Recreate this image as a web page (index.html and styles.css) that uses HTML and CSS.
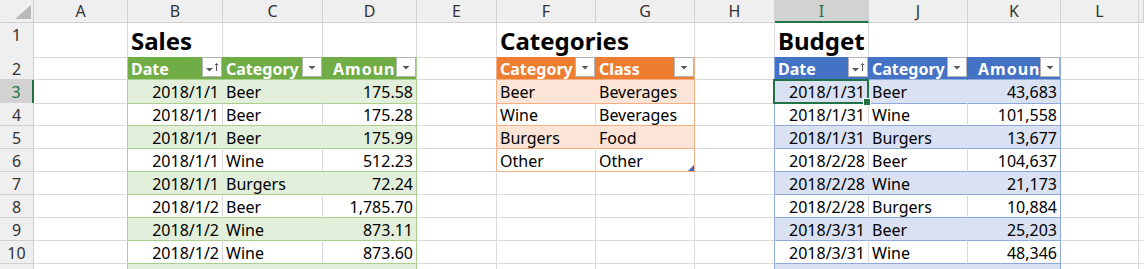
FILE: index.html
```html
<!DOCTYPE html>
<html>
<head>
<meta charset="utf-8">
<link rel="stylesheet" href="styles.css">
</head>
<body>
<div class="sheet">
  <div class="row hdr">
    <div class="corner"><svg width="33" height="22" viewBox="0 0 33 22"><polygon points="31,5 31,19 15,19" fill="#b9b9b9"/></svg></div>
    <div>A</div><div>B</div><div>C</div><div>D</div><div>E</div><div>F</div><div>G</div><div>H</div><div class="sel">I</div><div>J</div><div>K</div><div>L</div><div></div>
  </div>
  <div class="row r1">
    <div class="rh">1</div><div></div><div class="title">Sales</div><div></div><div></div><div></div><div class="title ov">Categories</div><div></div><div></div><div class="title">Budget</div><div></div><div></div><div></div><div></div>
  </div>
  <div class="row">
    <div class="rh">2</div>
    <div class="g tl"></div>
    <div class="g th">Date<span class="fb"><svg width="18" height="18" viewBox="0 0 18 18"><polygon points="3,10 10,10 6.5,13.5" fill="#595959"/><path d="M13.5 5.5V13 M11.8 7.3 13.5 5.5 15.2 7.3" stroke="#595959" stroke-width="1" fill="none"/></svg></span></div>
    <div class="g th">Category<span class="fb"><svg width="18" height="18" viewBox="0 0 18 18"><polygon points="5.5,8 12.5,8 9,11.5" fill="#595959"/></svg></span></div>
    <div class="g th te am">Amount<span class="fb"><svg width="18" height="18" viewBox="0 0 18 18"><polygon points="5.5,8 12.5,8 9,11.5" fill="#595959"/></svg></span></div>
    <div class="o tl"></div>
    <div class="o th">Category<span class="fb"><svg width="18" height="18" viewBox="0 0 18 18"><polygon points="5.5,8 12.5,8 9,11.5" fill="#595959"/></svg></span></div>
    <div class="o th te">Class<span class="fb"><svg width="18" height="18" viewBox="0 0 18 18"><polygon points="5.5,8 12.5,8 9,11.5" fill="#595959"/></svg></span></div>
    <div class="b tl"></div>
    <div class="b th">Date<span class="fb"><svg width="18" height="18" viewBox="0 0 18 18"><polygon points="3,10 10,10 6.5,13.5" fill="#595959"/><path d="M13.5 5.5V13 M11.8 7.3 13.5 5.5 15.2 7.3" stroke="#595959" stroke-width="1" fill="none"/></svg></span></div>
    <div class="b th">Category<span class="fb"><svg width="18" height="18" viewBox="0 0 18 18"><polygon points="5.5,8 12.5,8 9,11.5" fill="#595959"/></svg></span></div>
    <div class="b th te am">Amount<span class="fb"><svg width="18" height="18" viewBox="0 0 18 18"><polygon points="5.5,8 12.5,8 9,11.5" fill="#595959"/></svg></span></div>
    <div></div><div></div>
  </div>
  <div class="row">
    <div class="rh sel">3</div>
    <div class="g tl"></div>
    <div class="g tc ts r">2018/1/1</div><div class="g tc ts">Beer</div><div class="g tc ts te r">175.58</div>
    <div class="o tl"></div>
    <div class="o tc ts">Beer</div><div class="o tc ts te">Beverages</div>
    <div class="b tl"></div>
    <div class="b tc ts r cur">2018/1/31<span class="selbox"></span></div><div class="b tc ts">Beer</div><div class="b tc ts te r">43,683</div>
    <div></div><div></div>
  </div>
  <div class="row">
    <div class="rh">4</div>
    <div class="g tl"></div>
    <div class="g tc r">2018/1/1</div><div class="g tc">Beer</div><div class="g tc te r">175.28</div>
    <div class="o tl"></div>
    <div class="o tc">Wine</div><div class="o tc te">Beverages</div>
    <div class="b tl"></div>
    <div class="b tc r">2018/1/31</div><div class="b tc">Wine</div><div class="b tc te r">101,558</div>
    <div></div><div></div>
  </div>
  <div class="row">
    <div class="rh">5</div>
    <div class="g tl"></div>
    <div class="g tc ts r">2018/1/1</div><div class="g tc ts">Beer</div><div class="g tc ts te r">175.99</div>
    <div class="o tl"></div>
    <div class="o tc ts">Burgers</div><div class="o tc ts te">Food</div>
    <div class="b tl"></div>
    <div class="b tc ts r">2018/1/31</div><div class="b tc ts">Burgers</div><div class="b tc ts te r">13,677</div>
    <div></div><div></div>
  </div>
  <div class="row">
    <div class="rh">6</div>
    <div class="g tl"></div>
    <div class="g tc r">2018/1/1</div><div class="g tc">Wine</div><div class="g tc te r">512.23</div>
    <div class="o tl"></div>
    <div class="o tc">Other</div><div class="o tc te">Other<span class="rz"><svg width="6" height="6" viewBox="0 0 6 6"><polygon points="6,0 6,6 0,6" fill="#4f5bbd"/></svg></span></div>
    <div class="b tl"></div>
    <div class="b tc r">2018/2/28</div><div class="b tc">Beer</div><div class="b tc te r">104,637</div>
    <div></div><div></div>
  </div>
  <div class="row">
    <div class="rh">7</div>
    <div class="g tl"></div>
    <div class="g tc ts r">2018/1/1</div><div class="g tc ts">Burgers</div><div class="g tc ts te r">72.24</div>
    <div></div><div></div><div></div>
    <div class="b tl"></div>
    <div class="b tc ts r">2018/2/28</div><div class="b tc ts">Wine</div><div class="b tc ts te r">21,173</div>
    <div></div><div></div>
  </div>
  <div class="row">
    <div class="rh">8</div>
    <div class="g tl"></div>
    <div class="g tc r">2018/1/2</div><div class="g tc">Beer</div><div class="g tc te r">1,785.70</div>
    <div></div><div></div><div></div>
    <div class="b tl"></div>
    <div class="b tc r">2018/2/28</div><div class="b tc">Burgers</div><div class="b tc te r">10,884</div>
    <div></div><div></div>
  </div>
  <div class="row">
    <div class="rh">9</div>
    <div class="g tl"></div>
    <div class="g tc ts r">2018/1/2</div><div class="g tc ts">Wine</div><div class="g tc ts te r">873.11</div>
    <div></div><div></div><div></div>
    <div class="b tl"></div>
    <div class="b tc ts r">2018/3/31</div><div class="b tc ts">Beer</div><div class="b tc ts te r">25,203</div>
    <div></div><div></div>
  </div>
  <div class="row">
    <div class="rh">10</div>
    <div class="g tl"></div>
    <div class="g tc r">2018/1/2</div><div class="g tc">Wine</div><div class="g tc te r">873.60</div>
    <div></div><div></div><div></div>
    <div class="b tl"></div>
    <div class="b tc r">2018/3/31</div><div class="b tc">Wine</div><div class="b tc te r">48,346</div>
    <div></div><div></div>
  </div>
  <div class="row">
    <div class="rh"></div>
    <div class="g tl"></div>
    <div class="g tc ts"></div><div class="g tc ts"></div><div class="g tc ts te"></div>
    <div></div><div></div><div></div>
    <div class="b tl"></div>
    <div class="b tc ts"></div><div class="b tc ts"></div><div class="b tc ts te"></div>
    <div></div><div></div>
  </div>
</div>
</body>
</html>
```
FILE: styles.css
```css
* { box-sizing: border-box; margin: 0; padding: 0; }
html, body { width: 1144px; height: 269px; overflow: hidden; background: #fff; }
body { font-family: "Noto Sans", "Noto Sans CJK SC", sans-serif; font-size: 16px; color: #000; }

.row {
  display: grid;
  grid-template-columns: 34px 94px 95px 100px 94px 80px 99px 99px 80px 94px 99px 93px 78px 1fr;
  height: 23px;
}
.row > div {
  position: relative;
  border-right: 1px solid #dadada;
  border-bottom: 1px solid #dadada;
  padding: 1px 3px 0;
  line-height: 22px;
  white-space: nowrap;
  overflow: hidden;
}

/* column header row */
.hdr > div {
  background: #efefef;
  border-color: #d0d0d0;
  text-align: center;
  font-size: 16px;
  color: #333;
  padding: 0;
}
.hdr > .corner { padding: 0; }
.corner svg { display: block; }
.hdr > .sel {
  background: #d2d2d2;
  color: #217346;
  border-bottom: 2px solid #217346;
}

/* row headers */
.row > .rh {
  background: #efefef;
  border-color: #d0d0d0;
  text-align: center;
  color: #333;
  padding: 1px 0 0;
}
.row > .rh.sel {
  background: #d2d2d2;
  color: #217346;
  border-right: 2px solid #217346;
}

/* title row */
.r1 { height: 34px; }
.r1 > div { padding-top: 10px; }
.row > .title {
  font-size: 24px;
  font-weight: 700;
  line-height: 33px;
  padding-top: 1px;
}
.row > .ov { overflow: visible; border-right-color: transparent; }

/* tables */
.g { --h: #70ad47; --s: #e2efda; --b: #a9d08e; }
.o { --h: #ed7d31; --s: #fce4d6; --b: #f4b084; }
.b { --h: #4472c4; --s: #d9e1f2; --b: #8ea9db; }

.row > .tc { border-bottom-color: var(--b); }
.row > .th {
  background: var(--h);
  border-right-color: var(--h);
  border-bottom-color: var(--b);
  color: #fff;
  font-weight: 700;
}
.row > .ts { background: var(--s); border-right-color: var(--s); }
.row > .te { border-right-color: var(--b); }
.row > .tl { border-right-color: var(--b); }
.row > .am { padding-left: 10px; letter-spacing: 1px; }
.r { text-align: right; }

.fb {
  position: absolute;
  top: 0;
  right: 0;
  width: 20px;
  height: 20px;
  background: #fff;
  border: 1px solid #b4b4b4;
}
.fb svg { display: block; }

.rz { position: absolute; right: 0; bottom: 0; width: 6px; height: 6px; }
.rz svg { display: block; }

/* active cell */
.row > .cur { overflow: visible; z-index: 2; }
.selbox {
  position: absolute;
  left: -2px;
  top: -1px;
  right: -1px;
  bottom: -1px;
  border: 2px solid #217346;
}
.selbox::after {
  content: "";
  position: absolute;
  right: -4px;
  bottom: -4px;
  width: 6px;
  height: 6px;
  background: #217346;
  border: 1px solid #fff;
}
```
